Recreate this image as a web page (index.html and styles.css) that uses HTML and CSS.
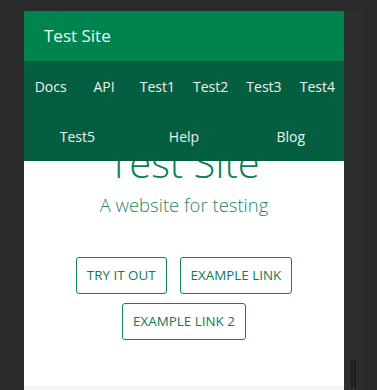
FILE: index.html
```html
<!DOCTYPE html>
<html lang="en">
<head>
    <meta charset="UTF-8">
    <meta name="viewport" content="width=device-width, initial-scale=1.0">
    <title>Test Site</title>
    <link rel="stylesheet" href="styles.css">
</head>
<body>
    <div id="frame">
        <div id="screen">
            <div id="top">
                <div class="brand">Test Site</div>
                <nav class="links">
                    <a href="#">Docs</a>
                    <a href="#">API</a>
                    <a href="#">Test1</a>
                    <a href="#">Test2</a>
                    <a href="#">Test3</a>
                    <a href="#">Test4</a>
                    <a href="#">Test5</a>
                    <a href="#">Help</a>
                    <a href="#">Blog</a>
                </nav>
            </div>
            <div id="hero">
                <h1>Test Site</h1>
                <p class="lead">A website for testing</p>
                <div class="actions">
                    <a class="btn" href="#">Try it out</a>
                    <a class="btn" href="#">Example link</a>
                    <a class="btn" href="#">Example link 2</a>
                </div>
            </div>
        </div>
        <div id="scroll">
            <span class="grip"></span>
        </div>
    </div>
</body>
</html>
```

FILE: styles.css
```css
*{
    margin: 0;
    padding: 0;
    box-sizing: border-box;
}
body{
    background-color: #2a2a2a;
    font-family: "Open Sans", "Noto Sans", sans-serif;
    overflow: hidden;
}
#frame{
    display: flex;
    padding: 11px 0 0 24px;
    height: 390px;
}
#screen{
    position: relative;
    width: 320px;
    height: 379px;
    overflow: hidden;
    background-color: #f5f5f5;
}
#top{
    /* header sits over the page content */
    position: absolute;
    top: 0;
    left: 0;
    right: 0;
    z-index: 2;
}
.brand{
    height: 50px;
    padding-left: 20px;
    line-height: 50px;
    font-size: 17px;
    color: #f2f7f4;
    background-color: #00844f;
}
.links{
    display: flex;
    flex-wrap: wrap;
    background-color: #045e40;
}
.links a{
    flex: 1 0 50px;
    height: 50px;
    display: flex;
    align-items: center;
    justify-content: center;
    font-size: 14px;
    font-weight: 500;
    color: #eef4f1;
    text-decoration: none;
}
#hero{
    height: 375px;
    padding-top: 128px;
    text-align: center;
    background-color: #fff;
}
#hero h1{
    font-size: 40px;
    line-height: 48px;
    font-weight: 300;
    color: #08805a;
}
.lead{
    margin-top: 4px;
    font-size: 18.5px;
    line-height: 28px;
    font-weight: 300;
    color: #1f8563;
}
.actions{
    display: flex;
    flex-wrap: wrap;
    justify-content: center;
    gap: 9px 13px;
    margin-top: 38px;
    padding: 0 40px;
}
.btn{
    display: block;
    height: 37px;
    padding: 0 10px;
    line-height: 35px;
    font-size: 13.4px;
    text-transform: uppercase;
    color: #107a56;
    text-decoration: none;
    border: 1px solid #0a8656;
    border-radius: 3px;
}
#scroll{
    position: relative;
    width: 20px;
    height: 379px;
    background-color: #2c2d2d;
}
.grip{
    position: absolute;
    left: 7px;
    bottom: 2px;
    width: 5px;
    height: 28px;
    border-left: 2px solid #1c1c1c;
    border-right: 2px solid #1c1c1c;
}
```
